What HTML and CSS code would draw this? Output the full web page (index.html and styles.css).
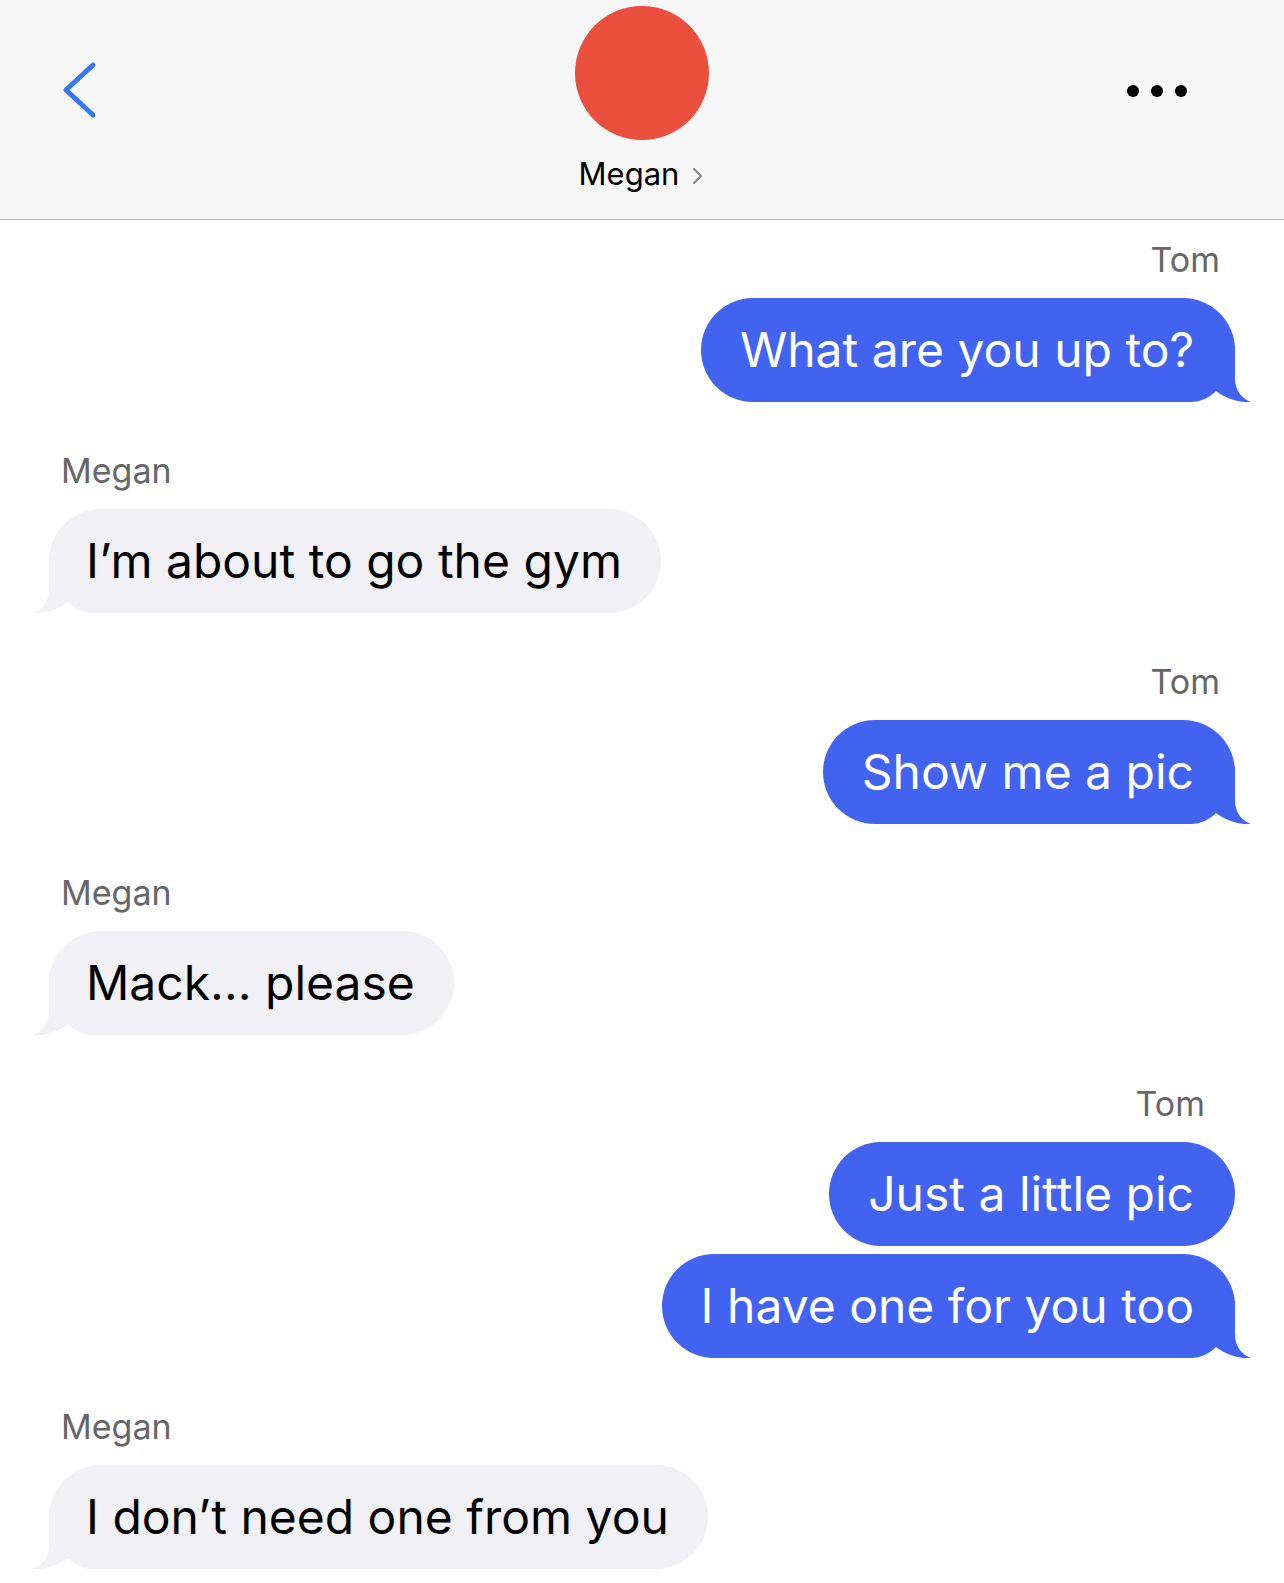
FILE: index.html
```html
<!DOCTYPE html>
<html lang="en">
<head>
    <meta charset="UTF-8">
    <meta name="viewport" content="width=device-width, initial-scale=1.0">
    <title>Megan</title>
    <link rel="stylesheet" href="styles.css">
</head>
<body>
    <header class="nav">
        <button class="nav-back" aria-label="Back">
            <svg width="36" height="58" viewBox="0 0 36 58">
                <path d="M31 4 L4 29 L31 54" fill="none" stroke="#3478f6" stroke-width="5" stroke-linecap="round" stroke-linejoin="round"/>
            </svg>
        </button>
        <div class="contact">
            <div class="avatar"></div>
            <div class="contact-name">
                Megan
                <svg class="contact-chevron" width="14" height="22" viewBox="0 0 14 22">
                    <path d="M3 4 L10 11 L3 18" fill="none" stroke="#8e8e93" stroke-width="2.4" stroke-linecap="round" stroke-linejoin="round"/>
                </svg>
            </div>
        </div>
        <button class="nav-more" aria-label="More">
            <span class="dot"></span><span class="dot"></span><span class="dot"></span>
        </button>
    </header>

    <main class="thread">
        <div class="group group--sent">
            <div class="sender">Tom</div>
            <div class="bubble bubble--sent bubble--tail">What are you up to?</div>
        </div>

        <div class="group group--received">
            <div class="sender">Megan</div>
            <div class="bubble bubble--received bubble--tail">I’m about to go the gym</div>
        </div>

        <div class="group group--sent">
            <div class="sender">Tom</div>
            <div class="bubble bubble--sent bubble--tail">Show me a pic</div>
        </div>

        <div class="group group--received">
            <div class="sender">Megan</div>
            <div class="bubble bubble--received bubble--tail">Mack... please</div>
        </div>

        <div class="group group--sent">
            <div class="sender sender--inset">Tom</div>
            <div class="bubble bubble--sent">Just a little pic</div>
            <div class="bubble bubble--sent bubble--tail">I have one for you too</div>
        </div>

        <div class="group group--received">
            <div class="sender">Megan</div>
            <div class="bubble bubble--received bubble--tail">I don’t need one from you</div>
        </div>
    </main>
</body>
</html>
```

FILE: styles.css
```css
body {
    margin: 0;
    font-family: Inter, "Noto Sans", sans-serif;
    background: #fff;
}

/* top bar */
.nav {
    display: grid;
    grid-template-columns: 1fr auto 1fr;
    box-sizing: border-box;
    height: 220px;
    padding-top: 6px;
    background: #f7f7f7;
    border-bottom: 1px solid #b4b4b4;
}
.nav button {
    background: none;
    border: none;
    padding: 0;
    cursor: pointer;
}
.nav-back {
    justify-self: start;
    align-self: start;
    margin: 55px 0 0 62px;
    display: flex;
}
.nav-more {
    justify-self: end;
    align-self: start;
    margin: 79px 97px 0 0;
    display: flex;
    gap: 12px;
}
.dot {
    width: 12px;
    height: 12px;
    border-radius: 50%;
    background: #000;
}
.contact {
    display: flex;
    flex-direction: column;
    align-items: center;
}
.avatar {
    width: 134px;
    height: 134px;
    border-radius: 50%;
    background: #ea4f3e;
}
.contact-name {
    display: flex;
    align-items: center;
    gap: 12px;
    margin-top: 14px;
    font-size: 31px;
    line-height: 40px;
    color: #000;
}
.contact-chevron {
    margin-top: 4px;
}

/* messages */
.thread {
    display: flex;
    flex-direction: column;
    padding: 20px 49px;
}
.group {
    display: flex;
    flex-direction: column;
}
.group + .group {
    margin-top: 49px;
}
.group--sent {
    align-items: flex-end;
}
.group--received {
    align-items: flex-start;
}
.sender {
    font-size: 34px;
    line-height: 40px;
    color: #666668;
    margin-bottom: 18px;
    padding: 0 12px;
}
.group--sent .sender {
    padding-right: 15px;
}
.group--sent .sender--inset {
    padding-right: 30px;
}
.bubble {
    position: relative;
    isolation: isolate;
    height: 104px;
    line-height: 104px;
    padding: 0 41px 0 39px;
    border-radius: 52px;
    font-size: 48px;
    white-space: nowrap;
}
.bubble + .bubble {
    margin-top: 8px;
}
.bubble--sent {
    background: #4262f0;
    color: #fff;
}
.bubble--received {
    background: #f1f1f5;
    color: #000;
    padding: 0 39px 0 37px;
}
.bubble--tail::after {
    content: "";
    position: absolute;
    z-index: -1;
    bottom: 0;
    width: 72px;
    height: 57px;
    -webkit-mask: url("data:image/svg+xml,%3Csvg xmlns='http://www.w3.org/2000/svg' viewBox='0 0 72 57'%3E%3Cpath d='M55 0 L55 33 C55 47 63 54 71 57 C60 58 46 54 36 46 C30 52 22 57 10 57 L3 57 L3 0 Z'/%3E%3C/svg%3E") no-repeat;
    mask: url("data:image/svg+xml,%3Csvg xmlns='http://www.w3.org/2000/svg' viewBox='0 0 72 57'%3E%3Cpath d='M55 0 L55 33 C55 47 63 54 71 57 C60 58 46 54 36 46 C30 52 22 57 10 57 L3 57 L3 0 Z'/%3E%3C/svg%3E") no-repeat;
}
.bubble--sent.bubble--tail::after {
    right: -17px;
    background: #4262f0;
}
.bubble--received.bubble--tail::after {
    left: -17px;
    background: #f1f1f5;
    transform: scaleX(-1);
}
```
